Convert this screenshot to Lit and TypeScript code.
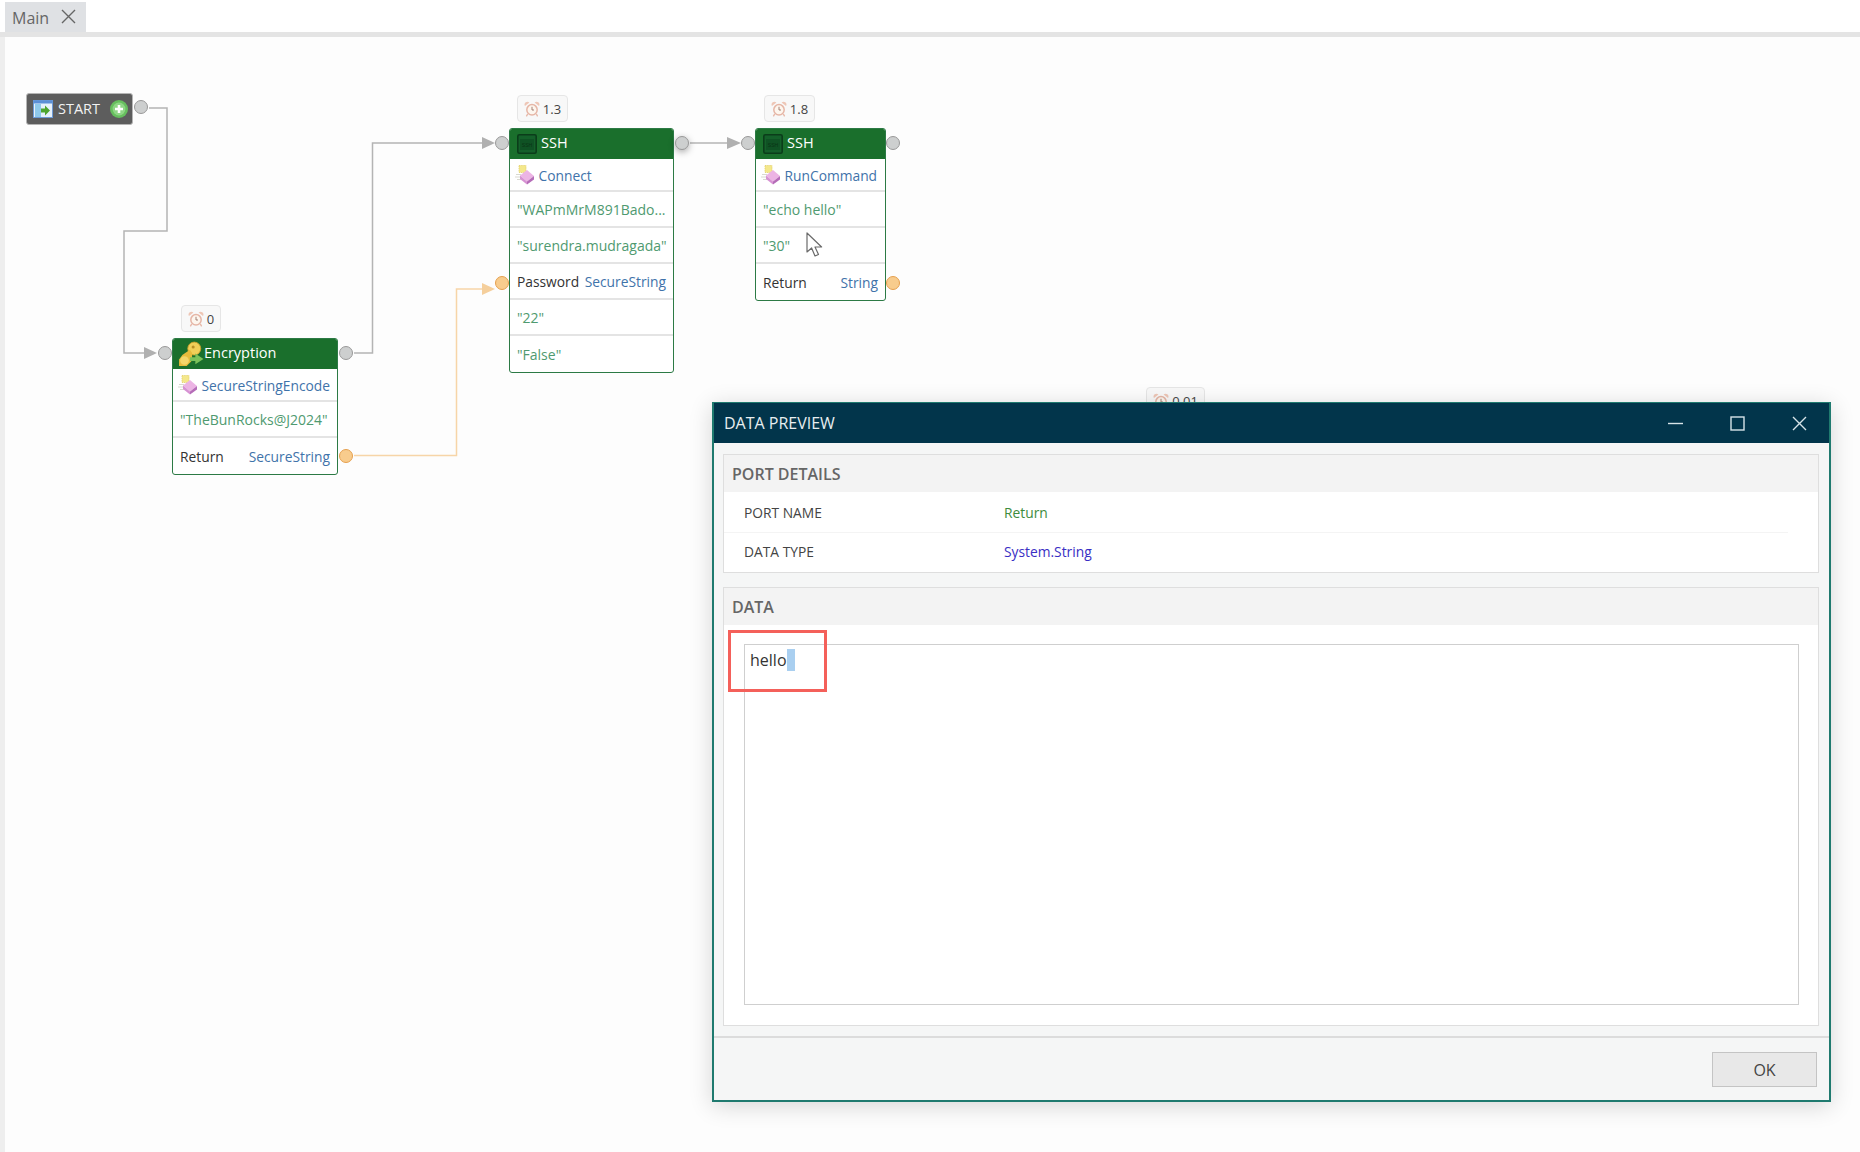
import { LitElement, html, css, svg } from "lit";
import { customElement } from "lit/decorators.js";

type Row =
  | { kind: "method"; text: string }
  | { kind: "value"; text: string }
  | { kind: "port"; name: string; type: string };

interface FlowNode {
  x: number;
  y: number;
  w: number;
  title: string;
  icon: "ssh" | "keys";
  rows: Row[];
}

// canvas coordinates, the canvas starts below the tab bar
const NODES: FlowNode[] = [
  {
    x: 172, y: 301, w: 166, title: "Encryption", icon: "keys",
    rows: [
      { kind: "method", text: "SecureStringEncode" },
      { kind: "value", text: '"TheBunRocks@J2024"' },
      { kind: "port", name: "Return", type: "SecureString" },
    ],
  },
  {
    x: 509, y: 91, w: 165, title: "SSH", icon: "ssh",
    rows: [
      { kind: "method", text: "Connect" },
      { kind: "value", text: '"WAPmMrM891Bado...' },
      { kind: "value", text: '"surendra.mudragada"' },
      { kind: "port", name: "Password", type: "SecureString" },
      { kind: "value", text: '"22"' },
      { kind: "value", text: '"False"' },
    ],
  },
  {
    x: 755, y: 91, w: 131, title: "SSH", icon: "ssh",
    rows: [
      { kind: "method", text: "RunCommand" },
      { kind: "value", text: '"echo hello"' },
      { kind: "value", text: '"30"' },
      { kind: "port", name: "Return", type: "String" },
    ],
  },
];

const BADGES = [
  { x: 181, y: 268, w: 40, text: "0" },
  { x: 517, y: 58, w: 51, text: "1.3" },
  { x: 764, y: 58, w: 51, text: "1.8" },
  { x: 1146, y: 350, w: 59, text: "0.01" },
];

const PORTS = [
  { x: 140.5, y: 70, hot: false },
  { x: 165, y: 316, hot: false },
  { x: 346, y: 316, hot: false },
  { x: 346, y: 418.5, hot: true },
  { x: 502, y: 106, hot: false },
  { x: 682, y: 106, hot: false, glow: true },
  { x: 502, y: 245.5, hot: true },
  { x: 748, y: 106, hot: false },
  { x: 893, y: 106, hot: false },
  { x: 893, y: 245.5, hot: true },
];

const clockIcon = svg`<svg class="clock" viewBox="0 0 16 16" width="16" height="16">
  <path d="M3.6 13L2.4 15.4M12.4 13L13.6 15.4" stroke="#e6b6a6" stroke-width="1.3"/>
  <circle cx="8" cy="8.8" r="5.2" fill="#fdf6ee" stroke="#e6b6a6" stroke-width="1.5"/>
  <path d="M8 5.8V9H10" fill="none" stroke="#9a7466" stroke-width="0.9"/>
  <path d="M1 5A2.8 2.8 0 0 1 5.4 1.6ZM15 5A2.8 2.8 0 0 0 10.6 1.6Z" fill="#eec6b6"/>
</svg>`;

const methodIcon = svg`<svg viewBox="0 0 20 20" width="20" height="20">
  <rect x="4" y="0.5" width="7" height="7" fill="#f4e88c" stroke="#e2cf6a" stroke-width="0.8" stroke-dasharray="1.4 0.8"/>
  <path d="M1 9.5H6M0 12H5M2 14.5H6" stroke="#d9d9d0" stroke-width="1"/>
  <path d="M5 10.5L12 5L19 11L12 16.5Z" fill="#ecb4e4"/>
  <path d="M5 10.5L12 16.5V19.5L5 14Z" fill="#d792d3"/>
  <path d="M12 16.5L19 11V14.5L12 19.5Z" fill="#b56cb8"/>
</svg>`;

const sshIcon = svg`<svg viewBox="0 0 20 20" width="20" height="20">
  <rect x="0.8" y="0.8" width="18.4" height="18.4" rx="1.5" fill="#14602a" stroke="#0b3d1a" stroke-width="1.6"/>
  <rect x="3" y="5" width="14" height="11" fill="#0f5224"/>
  <text x="10" y="13" font-size="5" text-anchor="middle" fill="#0a3315" font-family="Liberation Sans, sans-serif">SSH</text>
</svg>`;

const keysIcon = svg`<svg class="keys" viewBox="0 0 24 24" width="26" height="26">
  <circle cx="15" cy="7" r="6" fill="#f0cf58" stroke="#c79f2a" stroke-width="0.8"/>
  <circle cx="14" cy="5.5" r="1.4" fill="#b98f24"/>
  <path d="M11 8L4 13L1 17V23H8L13 18L13 11Z" fill="#e6bb3c"/>
  <circle cx="6" cy="18" r="4" fill="#f2d66a"/>
  <path d="M11 15H16V11.5L23.5 16.5L16 21.5V18.5H11Z" fill="#7cc25a"/>
</svg>`;

const startIcon = svg`<svg viewBox="0 0 20 18" width="20" height="18">
  <rect x="0.5" y="0.5" width="19" height="17" fill="#e6f1fb" stroke="#6d9ad6"/>
  <rect x="0.5" y="0.5" width="19" height="3" fill="#5b8fd6"/>
  <rect x="2" y="4" width="6" height="13" fill="#8fc9ea"/>
  <path d="M8 8.5H12V5.5L17 10.5L12 15.5V12.5H8Z" fill="#4ea52f"/>
</svg>`;

const plusIcon = svg`<svg viewBox="0 0 18 18" width="18" height="18">
  <circle cx="9" cy="9" r="9" fill="#66bf5e"/>
  <circle cx="9" cy="9" r="6.4" fill="#8fd686"/>
  <path d="M9 5V13M5 9H13" stroke="#fff" stroke-width="2.6"/>
</svg>`;

const closeIcon = svg`<svg viewBox="0 0 15 15" width="15" height="15">
  <path d="M1 1L14 14M14 1L1 14" fill="none" stroke="currentColor" stroke-width="1.4"/>
</svg>`;

@customElement("app-root")
export class AppRoot extends LitElement {
  static styles = css`
    :host {
      display: flex;
      flex-direction: column;
      width: 1860px;
      height: 1152px;
      overflow: hidden;
      background: #fdfdfd;
      font-family: "Open Sans", "Liberation Sans", sans-serif;
      font-size: 13.8px;
      color: #333;
    }
    .tabs {
      flex: none;
      box-sizing: border-box;
      height: 37px;
      padding: 2px 0 0 5px;
      border-bottom: 5px solid #e4e4e4;
      background: #fff;
    }
    .tab {
      box-sizing: border-box;
      display: inline-flex;
      align-items: center;
      gap: 12px;
      width: 81px;
      height: 30px;
      padding: 2px 0 0 7px;
      background: #dfe1e4;
      color: #666;
      font-size: 16px;
    }
    .tab svg { margin-top: -4px; }
    .canvas {
      position: relative;
      flex: 1;
      box-shadow: inset 5px 0 0 #eeeeee;
    }
    .wires {
      position: absolute;
      inset: 0;
      width: 100%;
      height: 100%;
    }
    .start {
      position: absolute;
      left: 26px;
      top: 56px;
      box-sizing: border-box;
      width: 107px;
      height: 32px;
      display: flex;
      align-items: center;
      padding: 0 4px 0 6px;
      gap: 5px;
      background: #5d5d5d;
      border: 1px solid #b5b5b5;
      border-radius: 3px;
      color: #f2f2f2;
      font-size: 14.5px;
    }
    .start > span:first-of-type { margin-top: -2px; }
    .start .plus { margin-left: auto; display: flex; }
    .start svg, .head svg, .method svg { flex: none; }
    .port {
      position: absolute;
      box-sizing: border-box;
      width: 14px;
      height: 14px;
      margin: -7px 0 0 -7px;
      border-radius: 50%;
      background: #cdcfcf;
      border: 1px solid #999;
    }
    .port.hot { background: #f8cc8d; border-color: #e6a04e; }
    .port.glow { box-shadow: 0 2px 7px rgba(0, 0, 0, 0.35); }
    .badge {
      position: absolute;
      box-sizing: border-box;
      height: 27px;
      display: flex;
      align-items: center;
      justify-content: center;
      gap: 3px;
      background: #f8f8f8;
      border: 1px solid #e6e6e6;
      border-radius: 4px;
      font-size: 13px;
      color: #444;
    }
    .node {
      position: absolute;
      box-sizing: border-box;
      border: 1px solid #2c7a45;
      border-radius: 3px;
      background: #fff;
      overflow: hidden;
    }
    .head {
      box-sizing: border-box;
      height: 30px;
      display: flex;
      align-items: center;
      gap: 4px;
      padding: 0 0 0 7px;
      background: #1a6f2c;
      color: #fff;
      font-size: 14.5px;
    }
    .head span { margin-top: -3px; }
    .head .keys { margin: 0 -4px 0 -2px; }
    .row {
      box-sizing: border-box;
      height: 36px;
      display: flex;
      align-items: center;
      justify-content: space-between;
      gap: 4px;
      padding: 1.5px 7px 0 7px;
      border-bottom: 2px solid #e4e4e4;
      white-space: nowrap;
    }
    .row:last-child { border-bottom: 0; }
    .row.method {
      height: 33px;
      justify-content: flex-start;
      gap: 3.5px;
      padding-left: 5px;
      color: #3f73aa;
    }
    .value { color: #4f9a70; font-size: 14px; }
    .type { color: #3f73aa; }
    .name { color: #333; }
    .cursor { position: absolute; left: 806px; top: 195px; }
    .dialog {
      position: absolute;
      left: 712px;
      top: 365px;
      box-sizing: border-box;
      width: 1119px;
      height: 700px;
      display: flex;
      flex-direction: column;
      background: #f5f6f6;
      border: 1px solid #1f7a6f;
      border-width: 1px 2px 2px 2px;
      box-shadow: 0 4px 22px rgba(0, 0, 0, 0.16);
    }
    .titlebar {
      flex: none;
      height: 40px;
      display: flex;
      align-items: center;
      padding: 0 22px 0 10px;
      background: #02354b;
      color: #e8eef0;
      font-size: 16px;
    }
    .titlebar .label { margin-right: auto; }
    .titlebar svg { display: block; color: #d8e4e8; }
    .winbtns { display: flex; align-items: center; gap: 47px; }
    .content {
      flex: 1;
      min-height: 0;
      display: flex;
      flex-direction: column;
      gap: 14px;
      padding: 11px 10px 10px 9px;
      border-bottom: 2px solid #dcdcdc;
    }
    .panel {
      position: relative;
      display: flex;
      flex-direction: column;
      background: #fff;
      border: 1px solid #dedede;
    }
    .panel.grow { flex: 1; min-height: 0; }
    .panel h2 {
      flex: none;
      margin: 0;
      height: 37px;
      display: flex;
      align-items: center;
      padding-left: 8px;
      background: #f3f3f3;
      color: #666;
      font-size: 16px;
      font-weight: 600;
    }
    .detail {
      box-sizing: border-box;
      height: 40px;
      margin-right: 30px;
      display: grid;
      grid-template-columns: 260px 1fr;
      align-items: center;
      padding-left: 20px;
      color: #444;
    }
    .detail + .detail { border-top: 1px solid #f4f4f4; padding-bottom: 2px; }
    .detail .ret { color: #3d8c3d; }
    .detail .sys { color: #3a2fc4; }
    .output {
      flex: 1;
      margin: 19px 19px 20px 20px;
      padding: 4px 0 0 5px;
      background: #fff;
      border: 1px solid #cfcfcf;
      font-size: 16px;
      line-height: 22px;
      color: #333;
    }
    .output .sel {
      display: inline-block;
      width: 8px;
      height: 22px;
      vertical-align: top;
      background: #a9cff0;
    }
    .mark {
      position: absolute;
      left: 4px;
      top: 42px;
      box-sizing: border-box;
      width: 99px;
      height: 62px;
      border: 3px solid #f4605a;
    }
    .footer {
      flex: none;
      box-sizing: border-box;
      height: 62px;
      display: flex;
      align-items: flex-start;
      justify-content: flex-end;
      padding: 14px 12px 0 0;
    }
    .ok {
      box-sizing: border-box;
      width: 105px;
      height: 35px;
      background: #e8e8e8;
      border: 1px solid #c4c4c4;
      color: #444;
      font: inherit;
      font-size: 16px;
    }
  `;

  private renderRow(r: Row) {
    if (r.kind === "method") {
      return html`<div class="row method">${methodIcon}<span>${r.text}</span></div>`;
    }
    if (r.kind === "value") {
      return html`<div class="row"><span class="value">${r.text}</span></div>`;
    }
    return html`<div class="row"><span class="name">${r.name}</span><span class="type">${r.type}</span></div>`;
  }

  render() {
    return html`
      <div class="tabs">
        <div class="tab">Main ${closeIcon}</div>
      </div>
      <div class="canvas">
        <svg class="wires" fill="none">
          <g stroke="#b4b4b4" stroke-width="1.5">
            <path d="M149 71H167V194H124V316H146" />
            <path d="M354 316H372.5V106H484" />
            <path d="M690 106H730" />
          </g>
          <path d="M354 418.5H456.5V252H484" stroke="#f7d5a8" stroke-width="1.5" />
          <g fill="#b0b0b0">
            <path d="M144 310L157 316L144 322Z" />
            <path d="M482 100L495 106L482 112Z" />
            <path d="M727 100L741 106L727 112Z" />
          </g>
          <path d="M482 246L495 252L482 258Z" fill="#f5cf9c" />
        </svg>

        <div class="start">${startIcon}<span>START</span><span class="plus">${plusIcon}</span></div>

        ${BADGES.map(
          (b) => html`<div class="badge" style="left:${b.x}px;top:${b.y}px;width:${b.w}px">${clockIcon}<span>${b.text}</span></div>`
        )}
        ${NODES.map(
          (n) => html`<div class="node" style="left:${n.x}px;top:${n.y}px;width:${n.w}px">
            <div class="head">${n.icon === "ssh" ? sshIcon : keysIcon}<span>${n.title}</span></div>
            ${n.rows.map((r) => this.renderRow(r))}
          </div>`
        )}
        ${PORTS.map(
          (p) => html`<div class="port ${p.hot ? "hot" : ""} ${p.glow ? "glow" : ""}" style="left:${p.x}px;top:${p.y}px"></div>`
        )}

        <svg class="cursor" width="18" height="26" viewBox="0 0 18 26">
          <path d="M1 1V20L5.6 16L9 24L12.5 22.5L9 15H15.6Z" fill="#fff" stroke="#6a6a6a" stroke-width="1.2" stroke-linejoin="round" />
        </svg>

        <div class="dialog">
          <div class="titlebar">
            <span class="label">DATA PREVIEW</span>
            <div class="winbtns">
              <svg viewBox="0 0 15 15" width="15" height="15"><path d="M0 7.5H15" stroke="currentColor" stroke-width="1.4" /></svg>
              <svg viewBox="0 0 15 15" width="15" height="15"><rect x="1" y="1" width="13" height="13" fill="none" stroke="currentColor" stroke-width="1.4" /></svg>
              ${closeIcon}
            </div>
          </div>
          <div class="content">
            <section class="panel">
              <h2>PORT DETAILS</h2>
              <div class="detail"><span>PORT NAME</span><span class="ret">Return</span></div>
              <div class="detail"><span>DATA TYPE</span><span class="sys">System.String</span></div>
            </section>
            <section class="panel grow">
              <h2>DATA</h2>
              <div class="output">hello<span class="sel"></span></div>
              <div class="mark"></div>
            </section>
          </div>
          <div class="footer"><button class="ok">OK</button></div>
        </div>
      </div>
    `;
  }
}
